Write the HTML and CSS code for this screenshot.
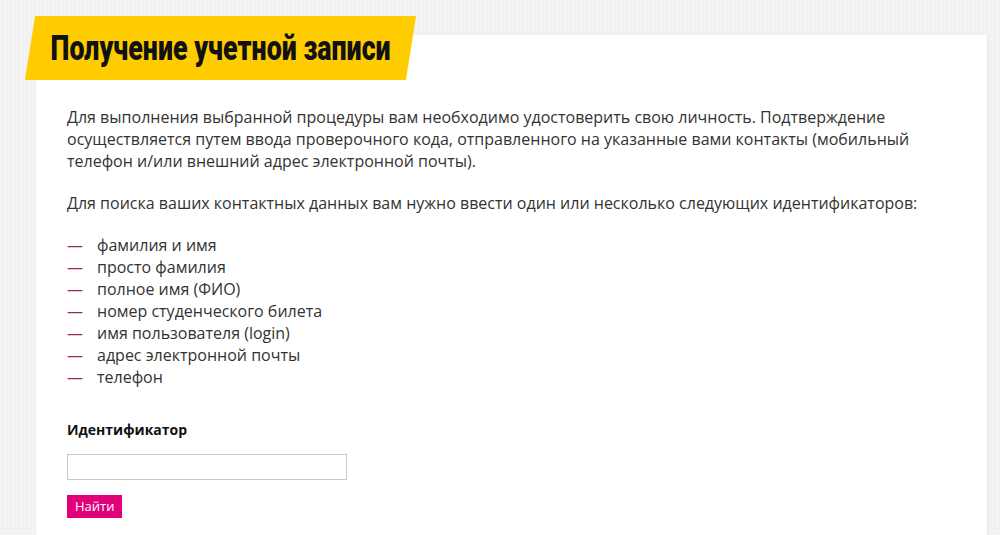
FILE: index.html
```html
<!DOCTYPE html>
<html lang="ru">
<head>
<meta charset="utf-8">
<title>Получение учетной записи</title>
<link rel="stylesheet" href="styles.css">
</head>
<body>
<div class="page">
  <div class="card">
    <div class="banner"><h1 class="title">Получение учетной записи</h1></div>
    <div class="content">
      <p class="para">Для выполнения выбранной процедуры вам необходимо удостоверить свою личность. Подтверждение осуществляется путем ввода проверочного кода, отправленного на указанные вами контакты (мобильный телефон и/или внешний адрес электронной почты).</p>
      <p class="para">Для поиска ваших контактных данных вам нужно ввести один или несколько следующих идентификаторов:</p>
      <ul class="list">
        <li class="item">фамилия и имя</li>
        <li class="item">просто фамилия</li>
        <li class="item">полное имя (ФИО)</li>
        <li class="item">номер студенческого билета</li>
        <li class="item">имя пользователя (login)</li>
        <li class="item">адрес электронной почты</li>
        <li class="item">телефон</li>
      </ul>
      <form class="form">
        <label class="label" for="ident">Идентификатор</label>
        <input class="input" id="ident" type="text">
        <button class="button" type="button">Найти</button>
      </form>
    </div>
  </div>
</div>
</body>
</html>
```
FILE: styles.css
```css
html, body {
  margin: 0;
  padding: 0;
}
body {
  background-color: #f0f0f0;
  background-image:
    repeating-linear-gradient(0deg, rgba(255,255,255,0.35) 0 1px, transparent 1px 4px),
    repeating-linear-gradient(90deg, rgba(255,255,255,0.35) 0 1px, transparent 1px 4px);
  font-family: "Open Sans", "Noto Sans", sans-serif;
  color: #333;
  height: 535px;
  overflow: hidden;
}
.page {
  padding: 35px 13px 0 36px;
}
.card {
  position: relative;
  background: #fff;
  min-height: 520px;
  box-shadow: 1px 0 2px rgba(0,0,0,0.06);
}
.banner {
  position: absolute;
  left: -6px;
  top: -19px;
  width: 381px;
  height: 64px;
  background: #ffcc00;
  transform: skewX(-9deg);
  display: flex;
  align-items: center;
}
.title {
  margin: 0;
  transform: skewX(9deg) scaleX(0.766);
  transform-origin: left center;
  padding-left: 27px;
  font-family: "Roboto", "DejaVu Sans", sans-serif;
  font-weight: 900;
  font-size: 35px;
  color: #111;
  white-space: nowrap;
}
.content {
  padding: 71px 31px 20px 31px;
  font-size: 16px;
  line-height: 22px;
}
.para {
  margin: 0 0 20px 0;
}
.list {
  list-style: none;
  margin: 0;
  padding: 0;
}
.item {
  display: flex;
}
.item::before {
  content: "—";
  color: #a0216e;
  width: 30px;
  flex: none;
}
.form {
  display: flex;
  flex-direction: column;
  align-items: flex-start;
  margin-top: 33px;
}
.label {
  font-weight: 700;
  font-size: 14px;
  line-height: 18px;
  color: #111;
}
.input {
  margin-top: 15px;
  width: 280px;
  height: 26px;
  box-sizing: border-box;
  border: 1px solid #c8c8c8;
  background: #fff;
  padding: 0 4px;
}
.button {
  margin-top: 15px;
  background: #e2007a;
  color: #fff;
  border: none;
  border-radius: 0;
  font-family: "Open Sans", sans-serif;
  font-size: 13px;
  padding: 0 8px;
  height: 23px;
  line-height: 23px;
}
```
